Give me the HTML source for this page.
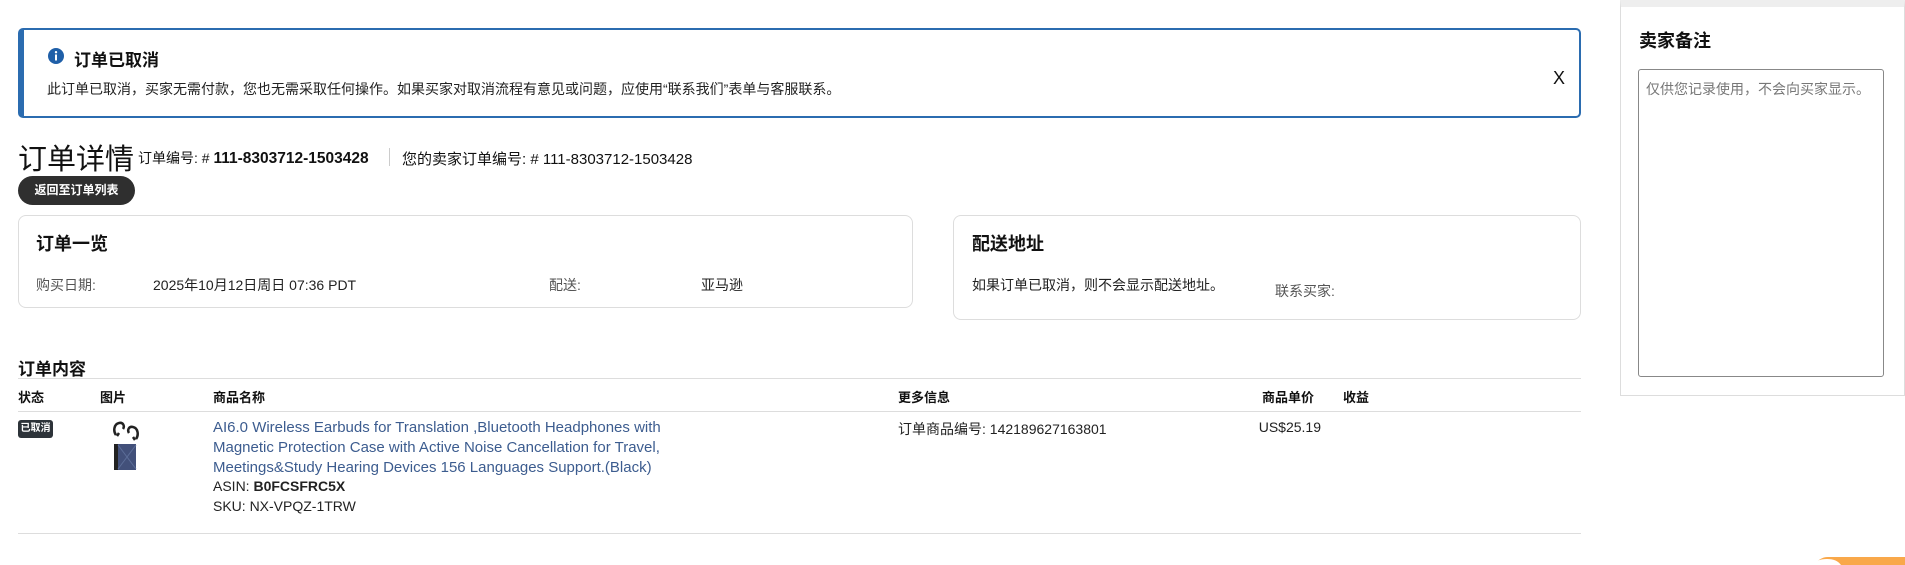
<!DOCTYPE html>
<html><head><meta charset="utf-8"><style>
*{box-sizing:border-box;margin:0;padding:0}
html,body{width:1905px;height:565px;overflow:hidden}
body{background:#fff;font-family:"Liberation Sans","Noto Sans CJK SC",sans-serif;color:#111;position:relative;font-size:14px}
.a{position:absolute;white-space:nowrap}
.card{position:absolute;border:1px solid #ddd;border-radius:8px;background:#fff}
.line{position:absolute;height:1px;background:#ddd;left:18px;width:1563px}
.h{font-weight:bold;font-size:18px}
.lab{color:#555;font-size:14px}
.th{font-weight:bold;font-size:13px}
.lk{color:#3c5c8f;font-size:15px;line-height:20px}
</style></head><body>
<div style="position:absolute;left:18px;top:28px;width:1563px;height:90px;border:2px solid #2b6cb0;border-left:6px solid #2b6cb0;border-radius:5px"></div>
<svg class="a" style="left:48px;top:48px" width="16" height="16" viewBox="0 0 16 16"><circle cx="8" cy="8" r="8" fill="#1f5fa8"/><rect x="7" y="6.5" width="2" height="6" fill="#fff"/><circle cx="8" cy="4.2" r="1.2" fill="#fff"/></svg>
<div class="a" style="left:74px;top:46px;font-size:17px;font-weight:bold">订单已取消</div>
<div class="a" style="left:47px;top:79px;font-size:14px;color:#222">此订单已取消，买家无需付款，您也无需采取任何操作。如果买家对取消流程有意见或问题，应使用“联系我们”表单与客服联系。</div>
<div class="a" style="left:1553px;top:68px;font-size:18px">X</div>

<div class="a" style="left:18px;top:136px;font-size:29px">订单详情</div>
<div class="a" style="left:138px;top:148px;font-size:14px">订单编号: # <b style="font-size:15.5px">111-8303712-1503428</b></div>
<div class="a" style="left:389px;top:148px;width:1px;height:18px;background:#ccc"></div>
<div class="a" style="left:402px;top:148px;font-size:15px">您的卖家订单编号: # 111-8303712-1503428</div>
<div class="a" style="left:18px;top:176px;width:117px;height:29px;background:#2f2f2f;border-radius:15px;color:#fff;font-size:12px;font-weight:bold;text-align:center;line-height:29px">返回至订单列表</div>

<div class="card" style="left:18px;top:215px;width:895px;height:93px"></div>
<div class="a h" style="left:36px;top:230px">订单一览</div>
<div class="a lab" style="left:36px;top:275px">购买日期:</div>
<div class="a" style="left:153px;top:275px;font-size:14px;color:#222">2025年10月12日周日 07:36 PDT</div>
<div class="a lab" style="left:549px;top:275px">配送:</div>
<div class="a" style="left:701px;top:275px;font-size:14px;color:#222">亚马逊</div>

<div class="card" style="left:953px;top:215px;width:628px;height:105px"></div>
<div class="a h" style="left:972px;top:230px">配送地址</div>
<div class="a" style="left:972px;top:275px;font-size:14px;color:#222">如果订单已取消，则不会显示配送地址。</div>
<div class="a lab" style="left:1275px;top:281px">联系买家:</div>

<div class="a" style="left:1620px;top:0;width:285px;height:396px;border:1px solid #ddd;border-top:7px solid #eee"></div>
<div class="a h" style="left:1639px;top:27px">卖家备注</div>
<div class="a" style="left:1638px;top:69px;width:246px;height:308px;border:1px solid #888;border-radius:3px"></div>
<div class="a" style="left:1646px;top:79px;font-size:14px;color:#777">仅供您记录使用，不会向买家显示。</div>

<div class="a h" style="left:18px;top:355px;font-size:17px">订单内容</div>
<div class="line" style="top:378px"></div>
<div class="a th" style="left:18px;top:387px">状态</div>
<div class="a th" style="left:100px;top:387px">图片</div>
<div class="a th" style="left:213px;top:387px">商品名称</div>
<div class="a th" style="left:898px;top:387px">更多信息</div>
<div class="a th" style="left:1262px;top:387px">商品单价</div>
<div class="a th" style="left:1343px;top:387px">收益</div>
<div class="line" style="top:411px"></div>
<div class="a" style="left:18px;top:420px;width:35px;height:18px;background:#2d3339;border-radius:3px;color:#fff;font-size:10px;font-weight:bold;text-align:center;line-height:18px">已取消</div>
<svg class="a" style="left:112px;top:421px" width="28" height="50" viewBox="0 0 28 50"><path d="M4 14C1 10 2 3 7 2c4-1 6 3 4 6" fill="none" stroke="#222" stroke-width="2.5"/><path d="M5 15l2-3" stroke="#222" stroke-width="2.5"/><path d="M24 18c3-4 2-11-3-12-4-1-6 3-4 6" fill="none" stroke="#222" stroke-width="2.5"/><path d="M23 19l-2-3" stroke="#222" stroke-width="2.5"/><rect x="3" y="23" width="21" height="26" fill="#42507a"/><rect x="2" y="23" width="4" height="26" fill="#222"/><path d="M6 24l18 24M24 24L6 48" stroke="#5c6d98" stroke-width="1"/></svg>
<div class="a lk" style="left:213px;top:418px">AI6.0 Wireless Earbuds for Translation ,Bluetooth Headphones with<br>Magnetic Protection Case with Active Noise Cancellation for Travel,<br>Meetings&amp;Study Hearing Devices 156 Languages Support.(Black)</div>
<div class="a" style="left:213px;top:478px;font-size:14px;color:#222">ASIN: <b>B0FCSFRC5X</b></div>
<div class="a" style="left:213px;top:498px;font-size:14px;color:#222">SKU: NX-VPQZ-1TRW</div>
<div class="a" style="left:898px;top:419px;font-size:14px;color:#222">订单商品编号: 142189627163801</div>
<div class="a" style="left:1250px;top:419px;width:71px;text-align:right;font-size:14px;color:#222">US$25.19</div>
<div class="line" style="top:533px"></div>
<svg class="a" style="left:1800px;top:556px" width="105" height="9" viewBox="0 0 105 9"><path d="M28 1H105V9H14C18 4 22 1 28 1Z" fill="#f9a84a"/><path d="M12 9C15 5 20 3 27 3S38 5 41 9Z" fill="#fff"/></svg>
</body></html>
